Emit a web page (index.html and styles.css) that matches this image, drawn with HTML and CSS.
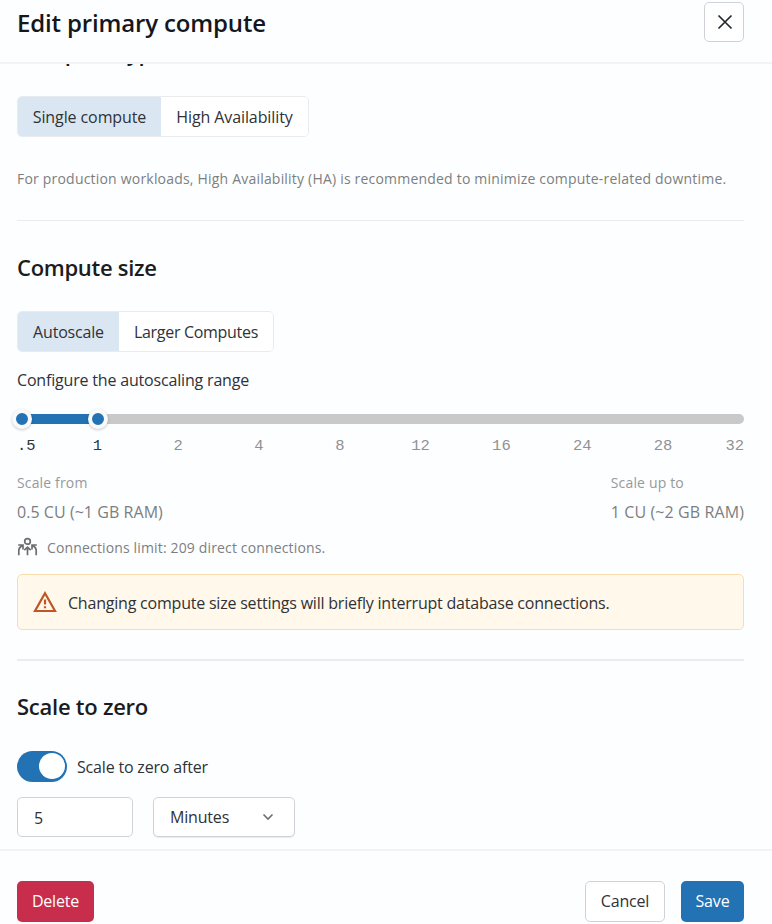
FILE: index.html
```html
<!DOCTYPE html>
<html lang="en">
<head>
<meta charset="utf-8">
<title>Edit primary compute</title>
<link rel="stylesheet" href="styles.css">
</head>
<body>
<div class="drawer">
  <header class="header">
    <h1 class="title"><span>Edit primary compute</span></h1>
    <button class="close" aria-label="Close"><svg width="16" height="16" viewBox="0 0 16 16"><path d="M1.5 1.5 14.5 14.5M14.5 1.5 1.5 14.5" fill="none" stroke="#25282b" stroke-width="1.7"/></svg></button>
  </header>
  <main class="content">
    <h2 class="heading type-heading">Compute type</h2>
    <div class="segmented seg-type"><button class="segment selected single">Single compute</button><button class="segment high">High Availability</button></div>
    <p class="note"><span>For production workloads, High Availability (HA) is recommended to minimize compute-related downtime.</span></p>
    <hr class="divider">
    <h2 class="heading size-heading"><span>Compute size</span></h2>
    <div class="segmented seg-size"><button class="segment selected auto">Autoscale</button><button class="segment larger">Larger Computes</button></div>
    <p class="range-label"><span>Configure the autoscaling range</span></p>
    <div class="slider"><div class="fill"></div><i class="thumb min"></i><i class="thumb max"></i></div>
    <div class="ticks"><span class="on">.5</span><span class="on">1</span><span>2</span><span>4</span><span>8</span><span>12</span><span>16</span><span>24</span><span>28</span><span>32</span></div>
    <div class="scales">
      <div><div class="scale-name"><span>Scale from</span></div><div class="scale-value"><span>0.5 CU (~1 GB RAM)</span></div></div>
      <div><div class="scale-name"><span>Scale up to</span></div><div class="scale-value up"><span>1 CU (~2 GB RAM)</span></div></div>
    </div>
    <div class="limit">
      <svg width="21" height="20" viewBox="0 0 21 20" fill="none" stroke="#6c6e70" stroke-width="1.7"><circle cx="10.5" cy="4.4" r="2.8"/><path d="M10.5 18.2V10.5M7.3 13.2 10.5 10.2 13.7 13.2M1.8 18.2V13Q1.8 10.8 5.4 8.2M1.2 8H6V12.4M19.2 18.2V13Q19.2 10.8 15.6 8.2M19.8 8H15V12.4"/></svg>
      <span>Connections limit: 209 direct connections.</span>
    </div>
    <div class="alert">
      <svg width="24" height="22" viewBox="0 0 24 22" fill="none" stroke="#c05628" stroke-width="2.2"><path d="M12 2.2 22 20H2Z"/><path d="M12 8.5V13.6M12 15.2V17.2"/></svg>
      <span>Changing compute size settings will briefly interrupt database connections.</span>
    </div>
    <hr class="divider thick">
    <h2 class="heading zero-heading"><span>Scale to zero</span></h2>
    <div class="toggle-row"><div class="toggle"></div><span>Scale to zero after</span></div>
    <div class="fields">
      <div class="field number">5</div>
      <div class="field select"><span>Minutes</span><svg width="12" height="8" viewBox="0 0 12 8"><path d="M1.5 1.5 6 6 10.5 1.5" fill="none" stroke="#6c6e70" stroke-width="1.6"/></svg></div>
    </div>
  </main>
  <footer class="footer">
    <button class="btn delete">Delete</button>
    <div class="actions"><button class="btn cancel">Cancel</button><button class="btn save">Save</button></div>
  </footer>
</div>
</body>
</html>
```
FILE: styles.css
```css
* { box-sizing: border-box; }
body { margin: 0; background: #fdfeff; color: #303236; font-family: "Open Sans", sans-serif; font-size: 16px; letter-spacing: -0.18px; }
button { font: inherit; letter-spacing: inherit; color: inherit; padding: 0; white-space: nowrap; }
h1, h2, p { margin: 0; white-space: nowrap; }
.drawer { height: 924px; display: flex; flex-direction: column; overflow: hidden; }
.header { height: 64px; flex: none; padding: 2px 28px 0 17px; display: flex; justify-content: space-between; align-items: flex-start; border-bottom: 2px solid #f2f3f5; }
.title { font-size: 24px; font-weight: 600; line-height: 42px; color: #15171b; letter-spacing: -0.15px; }
.close { width: 40px; height: 40px; padding-left: 2px; display: grid; place-items: center; border: 1px solid #cfd3d8; border-radius: 5px; background: #fff; }
.content { flex: 1; min-height: 0; overflow: hidden; padding: 0 28px 0 17px; }
.heading { font-size: 22px; font-weight: 600; line-height: 30px; color: #1a1c20; letter-spacing: -0.3px; }
.type-heading { margin-top: -27px; letter-spacing: -0.2px; }
.segmented { display: flex; width: max-content; height: 41px; border: 1px solid #e9ebee; border-radius: 5px; overflow: hidden; background: #fff; }
.seg-type { margin-top: 29px; letter-spacing: -0.1px; }
.segment { border: 0; background: #fff; }
.segment.selected { background: #dae7f2; }
.single { width: 143px; } .high { width: 147px; }
.auto { width: 101px; } .larger { width: 154px; letter-spacing: -0.3px; }
.note { margin-top: 32px; line-height: 20px; font-size: 14px; letter-spacing: 0.2px; color: #7c7e80; }
.divider { height: 1px; margin: 31px 0 0; border: 0; background: #eaecef; }
.divider.thick { height: 2px; margin-top: 29px; }
.size-heading { margin-top: 31px; }
.seg-size { margin-top: 29px; height: 41px; }
.range-label { margin-top: 17px; line-height: 22px; }
.slider { position: relative; height: 10px; margin-top: 23px; border-radius: 5px; background: #c9c9c9; }
.fill { height: 10px; width: 81px; background: #2272b4; border-radius: 5px; }
.thumb { position: absolute; top: -5px; width: 20px; height: 20px; border-radius: 50%; border: 4.5px solid #fafafa; background: #2272b4; box-shadow: 0 1px 3px rgba(0,0,0,.22); }
.min { left: -5px; } .max { left: 71px; }
.ticks { display: grid; grid-template-columns: 40px repeat(8, 80.8px) 1fr; margin-top: 12px; line-height: 20px; font-family: "Liberation Mono", monospace; font-size: 15.5px; letter-spacing: 0; text-align: center; color: #909193; }
.ticks .on { color: #303236; }
.ticks span:first-child { text-align: left; }
.ticks span:last-child { text-align: right; }
.scales { display: flex; justify-content: space-between; margin-top: 16px; white-space: nowrap; color: #7c7e80; }
.scale-name { line-height: 22px; font-size: 14px; letter-spacing: 0.15px; color: #97999b; }
.scale-value { line-height: 24px; margin-top: 6px; letter-spacing: 0.05px; }
.scale-value.up { letter-spacing: 0.1px; }
.limit { display: flex; align-items: center; gap: 9px; height: 22px; margin-top: 12px; font-size: 14px; letter-spacing: 0.15px; color: #7c7e80; }
.alert { height: 56px; margin-top: 16px; padding: 2px 0 0 15px; display: flex; align-items: center; gap: 11px; letter-spacing: -0.21px; border: 1px solid #fbdcae; border-radius: 5px; background: #fff8eb; }
.alert svg { margin-bottom: 3px; }
.zero-heading { margin-top: 30px; letter-spacing: -0.25px; }
.toggle-row { display: flex; align-items: center; gap: 10px; height: 32px; margin-top: 29px; }
.toggle-row span { padding-top: 2px; }
.toggle { width: 50px; height: 31px; border-radius: 16px; background: #2272b4; display: flex; align-items: center; justify-content: flex-end; padding-right: 2px; }
.toggle::after { content: ""; width: 26px; height: 26px; border-radius: 50%; background: #fff; }
.fields { display: flex; gap: 20px; margin-top: 15px; }
.field { height: 40px; border: 1px solid #cfd3d8; border-radius: 5px; background: #fff; display: flex; align-items: center; padding: 0 16px; }
.number { width: 116px; padding-top: 2px; }
.select { width: 142px; justify-content: space-between; padding-right: 20px; box-shadow: 0 1px 1px rgba(0,0,0,.08); }
.footer { height: 75px; flex: none; border-top: 2px solid #f2f3f5; padding: 30px 28px 0 17px; display: flex; justify-content: space-between; }
.actions { display: flex; gap: 16px; }
.btn { height: 41px; padding-bottom: 1px; border: 0; border-radius: 5px; color: #fff; }
.delete { width: 77px; background: #c82d4c; }
.cancel { width: 80px; border: 1px solid #cfd3d8; background: #fff; color: #303236; }
.save { width: 63px; background: #2272b4; }
```
